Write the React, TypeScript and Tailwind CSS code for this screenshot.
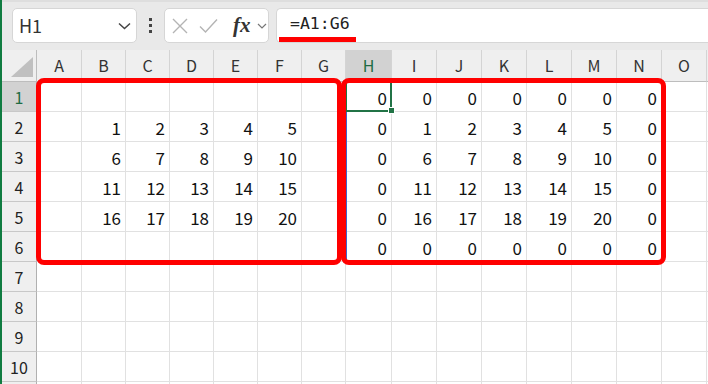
import React from 'react';

const COLS = ['A', 'B', 'C', 'D', 'E', 'F', 'G', 'H', 'I', 'J', 'K', 'L', 'M', 'N', 'O'];

// values per row, indexed by column letter
const DATA: Record<number, Record<string, number>> = {
  1: { H: 0, I: 0, J: 0, K: 0, L: 0, M: 0, N: 0 },
  2: { B: 1, C: 2, D: 3, E: 4, F: 5, H: 0, I: 1, J: 2, K: 3, L: 4, M: 5, N: 0 },
  3: { B: 6, C: 7, D: 8, E: 9, F: 10, H: 0, I: 6, J: 7, K: 8, L: 9, M: 10, N: 0 },
  4: { B: 11, C: 12, D: 13, E: 14, F: 15, H: 0, I: 11, J: 12, K: 13, L: 14, M: 15, N: 0 },
  5: { B: 16, C: 17, D: 18, E: 19, F: 20, H: 0, I: 16, J: 17, K: 18, L: 19, M: 20, N: 0 },
  6: { H: 0, I: 0, J: 0, K: 0, L: 0, M: 0, N: 0 },
};

const font = { fontFamily: '"Noto Sans CJK JP", "Noto Sans", sans-serif' };

const Toolbar: React.FC = () => (
  <div className="h-[50px] bg-[#e9e9e9] border-t-[2px] border-[#dedede] flex items-start pt-[6px]">
    {/* name box */}
    <div className="ml-[10px] w-[125px] h-[35px] bg-white rounded-[5px] border border-[#d6d6d6] flex items-center justify-between pl-[6px] pr-[5px]">
      <span className="text-[18px] text-[#333]" style={font}>H1</span>
      <svg width="13" height="8" viewBox="0 0 13 8" fill="none" stroke="#444" strokeWidth="1.5">
        <path d="M1 1.5 L6.5 6.5 L12 1.5" />
      </svg>
    </div>
    <div className="w-[27px] h-[35px] flex flex-col items-center justify-center gap-[3px]">
      <span className="w-[3px] h-[3px] bg-[#444]" />
      <span className="w-[3px] h-[3px] bg-[#444]" />
      <span className="w-[3px] h-[3px] bg-[#444]" />
    </div>
    {/* cancel / enter / fx */}
    <div className="w-[105px] h-[35px] bg-white rounded-[5px] border border-[#d6d6d6] flex items-center pl-[7px]">
      <svg width="16" height="16" viewBox="0 0 16 16" fill="none" stroke="#b4b4b4" strokeWidth="1.4">
        <path d="M1 1 L15 15 M15 1 L1 15" />
      </svg>
      <svg className="ml-[11px]" width="19" height="16" viewBox="0 0 19 16" fill="none" stroke="#b4b4b4" strokeWidth="1.4">
        <path d="M1 8.5 L6.5 14 L18 1.5" />
      </svg>
      <span
        className="ml-[15px] text-[21px] italic font-bold text-[#333] leading-none"
        style={{ fontFamily: '"Liberation Serif", serif' }}
      >
        fx
      </span>
      <svg className="ml-[6px]" width="10" height="6" viewBox="0 0 10 6" fill="none" stroke="#777" strokeWidth="1.2">
        <path d="M1 1 L5 5 L9 1" />
      </svg>
    </div>
    {/* formula input */}
    <div className="ml-[7px] flex-1 h-[35px] bg-white rounded-l-[5px] border border-r-0 border-[#d6d6d6] flex items-center pl-[13px]">
      <span className="text-[16.5px] text-[#222] mt-[-2px]" style={{ fontFamily: '"DejaVu Sans Mono", monospace' }}>
        =A1:G6
      </span>
    </div>
  </div>
);

const Grid: React.FC = () => {
  const rows = Array.from({ length: 11 }, (_, i) => i + 1);
  return (
    <div
      className="grid grid-cols-[35px_45px_repeat(6,44px)_46px_repeat(7,45px)_1fr] grid-rows-[32px_repeat(11,30px)]"
      style={font}
    >
      {/* corner */}
      <div className="bg-[#efefef] border-r border-b border-[#bdbdbd] relative">
        <svg className="absolute right-[3px] bottom-[4px]" width="22" height="20" viewBox="0 0 22 20">
          <path d="M22 0 L22 20 L0 20 Z" fill="#c0c0c0" />
        </svg>
      </div>
      {COLS.map(c => (
        <div
          key={c}
          className={`border-r border-b border-[#d4d4d4] border-b-[#bdbdbd] flex justify-center pt-[3px] text-[16px] ${
            c === 'H' ? 'bg-[#d2d2d2] text-[#1e6b43]' : 'bg-[#efefef] text-[#333]'
          }`}
        >
          {c}
        </div>
      ))}
      <div className="bg-[#efefef] border-b border-[#bdbdbd]" />

      {rows.map(r => (
        <React.Fragment key={r}>
          <div
            className={`border-r border-b border-[#b0b0b0] border-b-[#c8c8c8] flex items-center justify-center text-[16px] ${
              r === 1 ? 'bg-[#d2d2d2] text-[#1e6b43]' : 'bg-[#efefef] text-[#222]'
            }`}
          >
            {r <= 10 ? r : ''}
          </div>
          {COLS.map(c => (
            <div
              key={c}
              className="border-r border-b border-[#e1e1e1] flex items-center justify-end pr-[4px] pt-[2px] text-[17px] text-[#111] bg-white"
            >
              {DATA[r]?.[c] ?? ''}
            </div>
          ))}
          <div className="border-b border-[#e1e1e1] bg-white" />
        </React.Fragment>
      ))}
    </div>
  );
};

export default function App() {
  return (
    <div className="relative w-[708px] h-[384px] overflow-hidden bg-white border-l-[2px] border-[#107c41]">
      <Toolbar />
      <Grid />

      {/* red underline under the formula */}
      <div className="absolute left-[277px] top-[37px] w-[77px] h-[5px] bg-[#ff0000]" />

      {/* selected cell H1 */}
      <div className="absolute left-[343px] top-[81px] w-[47px] h-[31px] border-2 border-[#217346]" />
      <div className="absolute left-[386px] top-[107px] w-[7px] h-[7px] bg-[#217346] border border-white" />
      {/* thin blue line along H */}
      <div className="absolute left-[344px] top-[112px] w-px h-[152px] bg-[#3f63c8]" />

      {/* red frames */}
      <div className="absolute left-[34px] top-[78px] w-[306px] h-[187px] border-[5px] border-[#ff0000] rounded-[8px]" />
      <div className="absolute left-[339px] top-[78px] w-[325px] h-[187px] border-[5px] border-[#ff0000] rounded-[8px]" />
    </div>
  );
}
